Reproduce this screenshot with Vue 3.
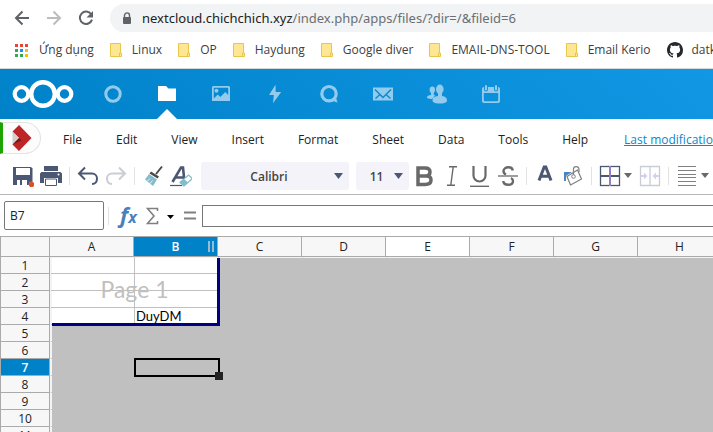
<script setup>
import { ref } from 'vue'

const bookmarks = ['Linux', 'OP', 'Haydung', 'Google diver', 'EMAIL-DNS-TOOL', 'Email Kerio']
const appDots = ['#ea4335', '#ea4335', '#ea4335', '#34a853', '#1a8cff', '#fbbc05', '#34a853', '#34a853', '#fbbc05']
const menus = ['File', 'Edit', 'View', 'Insert', 'Format', 'Sheet', 'Data', 'Tools', 'Help']
const columns = ['A', 'B', 'C', 'D', 'E', 'F', 'G', 'H']
const rows = Array.from({ length: 11 }, (_, i) => i + 1)
const cells = { B4: 'DuyDM' }
const cellName = ref('B7')
const formula = ref('')
</script>

<template>
  <div class="window">
    <div class="address-row">
      <button class="nav" aria-label="Back">
        <svg width="16" height="16" viewBox="0 0 16 16"><path d="M15 8H2M8.500 1.500L2 8l6.500 6.500" fill="none" stroke="#5f6368" stroke-width="2" /></svg>
      </button>
      <button class="nav" aria-label="Forward">
        <svg width="16" height="16" viewBox="0 0 16 16"><path d="M1 8h13M7.500 1.500L14 8l-6.500 6.500" fill="none" stroke="#babcbe" stroke-width="2" /></svg>
      </button>
      <button class="nav" aria-label="Reload">
        <svg width="16" height="16" viewBox="0 0 16 16"><path d="M13.200 4.300A6.200 6.200 0 1 0 14 9.600" fill="none" stroke="#5f6368" stroke-width="2" /><path d="M15 1v6.500H8.500z" fill="#5f6368" /></svg>
      </button>
      <div class="address">
        <svg width="10" height="13" viewBox="0 0 10 13"><path d="M2.500 6V3.400a2.500 2.500 0 0 1 5 0V6" fill="none" stroke="#5f6368" stroke-width="1.400" /><rect x="1" y="5" width="8" height="7" rx="1" fill="#5f6368" /></svg>
        <span class="url"><b>nextcloud.chichchich.xyz</b>/index.php/apps/files/?dir=/&amp;fileid=6</span>
      </div>
    </div>

    <nav class="bookmarks" aria-label="Bookmarks">
      <a href="#" class="apps">
        <svg width="13" height="13" viewBox="0 0 13 13"><rect v-for="(c, i) in appDots" :key="i" :x="(i % 3) * 5" :y="Math.floor(i / 3) * 5" width="3" height="3" :fill="c" /></svg>
        <span>Ứng dụng</span>
      </a>
      <a v-for="b in bookmarks" :key="b" href="#">
        <svg width="13" height="14" viewBox="0 0 13 14"><path d="M.5.500h10v9.500h1v3.500H.5z" fill="#ffe692" stroke="#e8c64c" /><path d="M9.500 13.500V10h1" fill="none" stroke="#e8c64c" /></svg>
        <span>{{ b }}</span>
      </a>
      <a href="#" class="github">
        <svg width="16" height="16" viewBox="0 0 16 16"><path fill="#24292e" d="M8 0C3.580 0 0 3.580 0 8c0 3.540 2.290 6.530 5.470 7.590.4.070.55-.17.55-.38 0-.19-.01-.82-.01-1.490-2.010.37-2.530-.49-2.690-.94-.09-.23-.48-.94-.82-1.130-.28-.15-.68-.52-.01-.53.63-.01 1.080.58 1.230.82.72 1.210 1.870.87 2.330.66.07-.52.28-.87.51-1.070-1.780-.2-3.640-.89-3.640-3.950 0-.87.31-1.590.82-2.150-.08-.2-.36-1.020.08-2.120 0 0 .67-.21 2.200.82.64-.18 1.320-.27 2-.27s1.360.09 2 .27c1.530-1.040 2.200-.82 2.200-.82.44 1.100.16 1.920.08 2.120.51.56.82 1.270.82 2.150 0 3.070-1.870 3.750-3.650 3.950.29.25.54.73.54 1.480 0 1.070-.01 1.930-.01 2.200 0 .21.15.46.55.38A8.010 8.010 0 0 0 16 8c0-4.420-3.580-8-8-8z" /></svg>
        <span>datk</span>
      </a>
    </nav>

    <header class="cloud">
      <a href="#" class="logo" aria-label="Home">
        <svg width="62" height="30" viewBox="0 0 62 30"><g fill="none" stroke="#fff"><circle cx="31" cy="15" r="11.800" stroke-width="4.400" /><circle cx="9.500" cy="15" r="6.800" stroke-width="4.200" /><circle cx="52.500" cy="15" r="6.800" stroke-width="4.200" /></g></svg>
      </a>
      <a href="#" class="app" aria-label="Dashboard"><svg viewBox="0 0 20 20"><circle cx="10" cy="10" r="7.200" fill="none" stroke="currentColor" stroke-width="3" /></svg></a>
      <a href="#" class="app current" aria-label="Files"><svg viewBox="0 0 20 20"><path d="M1 2h8l2.500 2.500H19V17H1z" fill="currentColor" /></svg></a>
      <a href="#" class="app" aria-label="Photos"><svg viewBox="0 0 20 20"><path fill="currentColor" fill-rule="evenodd" d="M2 2h16l1 1v14H1V3zm.8 1.800V14.500l4-4 2.500 2.500 5-5 2.900 3V3.800zM5.500 4.700a2 2 0 1 1 0 4 2 2 0 0 1 0-4z" /></svg></a>
      <a href="#" class="app" aria-label="Activity"><svg viewBox="0 0 20 20"><path d="M10.500.8L4 11h4.800L8 19.200 16.200 8h-5.500z" fill="currentColor" /></svg></a>
      <a href="#" class="app" aria-label="Talk"><svg viewBox="0 0 20 20"><circle cx="10" cy="9.700" r="7.200" fill="none" stroke="currentColor" stroke-width="3.200" /><path d="M16.500 12l2 6.500-6.500-2z" fill="currentColor" /></svg></a>
      <a href="#" class="app" aria-label="Mail"><svg viewBox="0 0 20 20"><path d="M0 3.500h20v13H0z" fill="currentColor" /><path d="M2 5.500l8 8 8-8M2.500 14.500l4.500-4M17.500 14.500l-4.500-4" fill="none" stroke="#0b8bd5" stroke-width="1.500" /></svg></a>
      <a href="#" class="app" aria-label="Contacts"><svg viewBox="0 0 20 20"><g fill="currentColor"><ellipse cx="12.800" cy="5.200" rx="3.800" ry="4.700" /><path d="M11 8h4v4c3.500.6 5 1.600 5 4.500 0 1-1 3-7 3s-7.500-1.500-7.500-3.200c0-2.600 2-3.800 5.500-4.300z" /><ellipse cx="5.300" cy="5.800" rx="2.700" ry="3.300" /><path d="M4 8h2.800v3l1.500.6-3.200 3.400C1 15 0 14.300 0 13.300c0-1.500 1.500-2.100 4-2.400z" /></g></svg></a>
      <a href="#" class="app" aria-label="Calendar"><svg viewBox="0 0 20 20"><g fill="none" stroke="currentColor"><path fill="currentColor" fill-rule="evenodd" stroke="none" d="M3 3h14a2 2 0 0 1 2 2v12a2 2 0 0 1-2 2H3a2 2 0 0 1-2-2V5a2 2 0 0 1 2-2zm-.2 6v7.500l.7.700h13l.7-.7V9z" /><path d="M5 1.500v4M15 1.500v4" stroke="#0c8cd8" stroke-width="4" stroke-linecap="round" /><path d="M5 2v3.500M15 2v3.500" stroke-width="2.200" stroke-linecap="round" /></g></svg></a>
    </header>

    <nav class="menu" aria-label="Document">
      <a href="#" class="doc-type" aria-label="Collabora">
        <svg width="20" height="26" viewBox="0 0 20 26"><path d="M7 0l12.500 13L7 26 .5 19.500 7 13 .5 6.500z" fill="#bd2527" /><path d="M.5 6.500L7 13 .5 19.500z" fill="#d0cfd0" /><path d="M.5 19.500L7 13l2.500 2.500z" fill="#7c1416" /></svg>
      </a>
      <button v-for="m in menus" :key="m">{{ m }}</button>
      <a href="#" class="modified">Last modification</a>
    </nav>

    <div class="toolbar" role="toolbar">
      <button aria-label="Save"><svg viewBox="0 0 22 22"><path d="M1 2h18l1.500 1.500V20H1z" fill="#4c5873" /><path d="M4 3h14v7H4z" fill="#fff" /><path d="M5 20v-5h10v5z" fill="#fff" /><path d="M9 15v5" stroke="#4c5873" stroke-width="2" /><circle cx="20" cy="20" r="3.200" fill="#fff" /><circle cx="19.500" cy="19.500" r="2.700" fill="#d9502e" /></svg></button>
      <button aria-label="Print"><svg viewBox="0 0 22 22"><path d="M4 1h14v5H4z" fill="#4c5873" /><path d="M1.500 7h19l1.500 1.500V18h-4v-5H4v5H0V8.500z" fill="#4c5873" /><path d="M5.500 14h11v6.500h-11z" fill="#fff" stroke="#4c5873" /><circle cx="18.500" cy="9.500" r="1" fill="#fff" /></svg></button>
      <i></i>
      <button aria-label="Undo"><svg viewBox="0 0 22 22"><path d="M8 2.500L2 8.500l6 6M2.500 8.500H15a5 5 0 0 1 5 5c0 3.500-2 5.500-5 5.500" fill="none" stroke="#4c5873" stroke-width="2" /></svg></button>
      <button aria-label="Redo"><svg viewBox="0 0 22 22"><path d="M14 2.500l6 6-6 6M19.500 8.500H7a5 5 0 0 0-5 5C2 17 4 19 7 19" fill="none" stroke="#c9cdd5" stroke-width="2" /></svg></button>
      <i></i>
      <button aria-label="Clone formatting"><svg viewBox="0 0 22 22"><path d="M20 1.500L14 9" stroke="#4a4a4a" stroke-width="2" /><path d="M9 6.500l8 5-1.500 2-8-5z" fill="#4a4a4a" /><path d="M7 9l8 5.500L11 21 3 14.500z" fill="#83bdcc" /><path d="M5.500 16l2.500-2.500M8 18.500l2.500-3" stroke="#fff" stroke-width=".8" /></svg></button>
      <button aria-label="Clear formatting"><svg viewBox="0 0 22 22"><path d="M2.500 17L11 2.500h2L14.500 17M6 12.500h8" fill="none" stroke="#4c5873" stroke-width="2.600" /><path d="M0 20.500h12" stroke="#4c5873" stroke-width="1.200" /><path d="M10 17.500L18.500 10l4 3.500L14 21z" fill="#fff" stroke="#83bdcc" stroke-width="1.300" /><path d="M10 17.500l4-3.500 4 3.500L14 21z" fill="#83bdcc" /></svg></button>
      <label class="pick family"><select aria-label="Font name"><option>Calibri</option></select><svg width="9" height="6" viewBox="0 0 9 6"><path d="M0 0h9L4.500 6z" fill="#4c5873" /></svg></label>
      <label class="pick size"><select aria-label="Font size"><option>11</option></select><svg width="9" height="6" viewBox="0 0 9 6"><path d="M0 0h9L4.500 6z" fill="#4c5873" /></svg></label>
      <button aria-label="Bold"><svg viewBox="0 0 22 22"><path d="M5 3v16.500h7c4.500 0 6-2 6-4.500s-1.800-4-4.500-4c2-.3 3.500-1.700 3.500-4C17 4.500 15.500 3 12 3zM5 11h9" fill="none" stroke="#696969" stroke-width="3.500" /></svg></button>
      <button aria-label="Italic"><svg viewBox="0 0 22 22"><path d="M8 1.700h8M6 20.300h8M12.200 2L9.800 20" fill="none" stroke="#696969" stroke-width="1.400" /></svg></button>
      <button aria-label="Underline"><svg viewBox="0 0 22 22"><path d="M4.500 1v9.500a6 6 0 0 0 12 0V1" fill="none" stroke="#696969" stroke-width="2.200" /><path d="M1 21.300h19" stroke="#696969" stroke-width="1.400" /></svg></button>
      <button aria-label="Strikethrough"><svg viewBox="0 0 22 22"><path d="M15.800 5.500C15.500 3 13.500 2.200 11.500 2.200 8.500 2.200 6.500 4 6.500 6c0 1.500 1 2.800 2.500 3.500M14 13c1.500.7 2 1.800 2 3 0 2.500-2 3.800-4.800 3.800-2.700 0-4.700-1.200-5-3.800" fill="none" stroke="#696969" stroke-width="2.400" /><path d="M1 11h20" stroke="#696969" stroke-width="1.300" /></svg></button>
      <i></i>
      <button aria-label="Font color"><svg viewBox="0 0 22 22"><path d="M5 15.500L10.200 2h1.600L17 15.500M7 11.200h8" fill="none" stroke="#4c5873" stroke-width="3" /></svg></button>
      <button aria-label="Background color"><svg viewBox="0 0 22 22"><path d="M2 7h8l-6 4v5H2z" fill="#4b86c4" /><path d="M5 11.500L15.500 5l4 9-11 6z" fill="#fff" stroke="#808080" stroke-width="1.200" stroke-linejoin="round" /><path d="M11.500 11V4c0-3 5-3.500 5.500 0v3" fill="none" stroke="#808080" stroke-width="1.200" /><circle cx="11.500" cy="11.500" r="1.800" fill="#fff" stroke="#808080" /></svg></button>
      <i></i>
      <button aria-label="Borders"><svg viewBox="0 0 22 22"><rect x="1.500" y="1.500" width="19" height="19" fill="#fff" stroke="#4c5873" stroke-width="1.300" /><path d="M1 11h20" stroke="#4c5873" stroke-width="2" /><path d="M11 1v20" stroke="#9380c4" stroke-width="2" /></svg></button>
      <button class="drop" aria-label="Border options"><svg viewBox="0 0 8 5"><path d="M0 0h8L4 5z" fill="#696969" /></svg></button>
      <button aria-label="Merge cells"><svg viewBox="0 0 22 22"><path d="M1.500 1.500h19v19h-19zM11 1v20" fill="none" stroke="#c9cdd5" stroke-width="1.300" /><path d="M2 11h4M16 11h4" stroke="#d6cff0" stroke-width="2" /><path d="M5 7.500L8.500 11 5 14.500zM17 7.500L13.500 11l3.500 3.500z" fill="#d6cff0" /></svg></button>
      <i></i>
      <button aria-label="Align"><svg viewBox="0 0 22 22"><path d="M2 1.500h18M2 5.500h18M2 9.500h18M2 12.500h18M2 16.500h18M2 20.500h18" stroke="#808080" /></svg></button>
      <button class="drop" aria-label="Align options"><svg viewBox="0 0 8 5"><path d="M0 0h8L4 5z" fill="#696969" /></svg></button>
    </div>

    <div class="formula-row">
      <input v-model="cellName" class="cell-name" aria-label="Cell address" />
      <i></i>
      <button class="fx" aria-label="Function wizard">f<small>x</small></button>
      <button class="sum" aria-label="Sum"><svg width="13" height="18" viewBox="0 0 13 18"><path d="M11.500 4V1.500H1.500L8 9l-6.500 7.500h10V14" fill="none" stroke="#808080" stroke-width="1.600" /></svg></button>
      <button class="sum-drop" aria-label="Sum options"><svg width="7" height="4" viewBox="0 0 7 4"><path d="M0 0h7L3.500 4z" fill="#000" /></svg></button>
      <button class="equals" aria-label="Formula"><svg width="12" height="9" viewBox="0 0 12 9"><path d="M0 1.500h12M0 7.500h12" stroke="#808080" stroke-width="2" /></svg></button>
      <input v-model="formula" class="formula" aria-label="Formula bar" />
    </div>

    <div class="sheet">
      <table>
        <thead>
          <tr>
            <th class="corner"></th>
            <th v-for="c in columns" :key="c" :class="{ active: c === 'B', hover: c === 'E' }">{{ c }}<span v-if="c === 'B'" class="grip"></span></th>
          </tr>
        </thead>
        <tbody>
          <tr v-for="r in rows" :key="r">
            <th :class="{ active: r === 7 }">{{ r }}</th>
            <td v-for="c in columns" :key="c" :class="{ page: r < 5 && c < 'C' }">{{ cells[c + r] }}</td>
          </tr>
        </tbody>
      </table>
      <div class="page-edge">Page 1</div>
      <div class="cursor"></div>
    </div>
  </div>
</template>

<style>
body {
  margin: 0;
  overflow: hidden;
}
</style>

<style scoped>
.window {
  height: 100vh;
  display: flex;
  flex-direction: column;
  overflow: hidden;
  background: #fff;
  color: #222;
  font: 12px/16px "Open Sans", "Noto Sans", sans-serif;
}
.window > * {
  flex-shrink: 0;
}
button {
  padding: 0;
  border: 0;
  background: none;
  color: inherit;
  font: inherit;
}
a {
  color: inherit;
  text-decoration: none;
}
svg {
  display: block;
}
input {
  box-sizing: border-box;
  border: 1px solid #777;
  background: #fff;
  color: #222;
  font: inherit;
}

.address-row {
  display: flex;
  align-items: center;
  gap: 16px;
  height: 28px;
  padding: 4px 0 4px 14px;
}
.address {
  flex: 1;
  display: flex;
  align-items: center;
  gap: 10px;
  height: 28px;
  padding-left: 12px;
  border-radius: 14px 0 0 14px;
  background: #f1f3f4;
}
.url {
  color: #6b6f73;
  font-family: "Noto Sans", sans-serif;
  font-size: 13px;
  white-space: nowrap;
}
.url b {
  color: #202124;
  font-weight: 400;
}

.bookmarks {
  display: flex;
  align-items: center;
  gap: 16px;
  height: 28px;
  padding: 0 0 4px 15px;
  border-bottom: 1px solid #d5d7da;
  color: #3c4043;
  font-size: 12px;
  white-space: nowrap;
}
.bookmarks a {
  display: flex;
  align-items: center;
  gap: 9px;
}
.bookmarks .apps {
  gap: 11px;
}

.cloud {
  display: flex;
  align-items: center;
  height: 50px;
  padding-left: 12px;
  background: linear-gradient(40deg, #0082c9, #1197e4);
}
.logo {
  width: 74px;
}
.app {
  display: flex;
  align-items: center;
  justify-content: center;
  width: 54px;
  height: 50px;
  color: #93cbec;
}
.app svg {
  width: 20px;
  height: 20px;
}
.current {
  position: relative;
  color: #fff;
}
.current::after {
  content: "";
  position: absolute;
  bottom: 0;
  border: 10px solid transparent;
  border-top: 0;
  border-bottom-color: #fff;
}

.menu {
  display: flex;
  align-items: center;
  height: 35px;
  padding-top: 3px;
  gap: 34px;
  font-size: 12px;
  white-space: nowrap;
}
.doc-type {
  display: flex;
  flex-shrink: 0;
  align-items: center;
  box-sizing: border-box;
  width: 41px;
  height: 32px;
  margin: 0 -12px 3px 0;
  padding-left: 9px;
  border: 1px solid #e3e3e3;
  border-left: 3px solid #1ba400;
  border-radius: 0 16px 16px 0;
  background: #fcfcfc;
}
.modified {
  margin-left: 2px;
  color: #0b87cc;
  text-decoration: underline;
}

.toolbar {
  display: flex;
  align-items: center;
  height: 37px;
  padding-left: 9px;
  border-bottom: 1px solid #b6b6b6;
}
.toolbar > * {
  flex-shrink: 0;
}
.toolbar button {
  display: flex;
  justify-content: center;
  width: 28px;
}
.toolbar button svg {
  width: 22px;
  height: 22px;
}
.toolbar .drop {
  width: 12px;
  justify-content: flex-start;
}
.toolbar .drop svg {
  width: 8px;
  height: 5px;
}
.toolbar i,
.formula-row i {
  width: 1px;
  height: 18px;
  margin: 0 4px;
  background: #e2e2e2;
}
.pick {
  position: relative;
  height: 28px;
  border-radius: 3px;
  background: #f3f3f9;
}
.pick select {
  appearance: none;
  width: 100%;
  height: 100%;
  padding: 2px 12px 0 0;
  border: 0;
  background: none;
  color: #444;
  font: 600 12px/16px "Open Sans", sans-serif;
  text-align: center;
  text-align-last: center;
}
.pick svg {
  position: absolute;
  top: 11px;
  right: 6px;
}
.family {
  width: 148px;
  margin: 0 7px 0 6px;
}
.size {
  width: 53px;
  margin-right: 1px;
}

.formula-row {
  display: flex;
  align-items: center;
  height: 41px;
  padding-left: 4px;
}
.formula-row > * {
  flex-shrink: 0;
}
.cell-name {
  width: 100px;
  height: 29px;
  padding: 0 5px;
  border-radius: 2px;
  font-size: 12px;
}
.fx {
  width: 22px;
  margin-left: 7px;
  color: #4b7fbc;
  font: italic 700 22px/26px "Open Sans", sans-serif;
  text-align: left;
  white-space: nowrap;
}
.fx small {
  font-size: 16px;
}
.sum {
  margin-left: 4px;
}
.sum-drop {
  margin: 3px 10px 0 8px;
}
.equals {
  margin-right: 6px;
}
.formula-row .formula {
  flex: 1;
  min-width: 0;
  height: 22px;
  border-right: 0;
}

.sheet {
  position: relative;
  flex: 1 0 0;
  min-height: 0;
  overflow: hidden;
  background: silver;
}
.window > .sheet {
  flex-shrink: 1;
}
table {
  width: 722px;
  table-layout: fixed;
  border-collapse: separate;
  border-spacing: 0;
}
th {
  box-sizing: border-box;
  height: 17px;
  padding: 0;
  border-right: 1px solid #aaa;
  border-bottom: 1px solid #aaa;
  background: #f7f7f7;
  font-weight: 400;
  line-height: 15px;
}
thead th {
  position: relative;
  width: 84px;
  height: 21px;
  border-top: 1px solid #aaa;
}
tbody th,
.corner {
  border-left: 1px solid #aaa;
}
thead .corner {
  width: 50px;
}
th.hover {
  background: #fff;
}
th.active {
  background: #0082c9;
  color: #fff;
  font-weight: 600;
}
.grip {
  position: absolute;
  top: 4px;
  right: 3px;
  width: 2px;
  height: 11px;
  border: solid #9cb9d0;
  border-width: 0 2px;
}
td {
  box-sizing: border-box;
  height: 17px;
  padding: 0 1px;
  border: solid transparent;
  border-width: 0 0 1px 1px;
  color: #000;
  font: 13px/15px Lato, sans-serif;
}
td.page {
  border-color: silver;
  background: #fff;
}
tbody td:nth-child(2) {
  border-left: 2px solid #f4f4f4;
}
tbody tr:first-child td {
  border-top: 1px solid #f4f4f4;
}
.page-edge {
  position: absolute;
  top: 22px;
  left: 52px;
  box-sizing: border-box;
  width: 168px;
  height: 68px;
  border: solid #000080;
  border-width: 0 3px 3px 0;
  color: silver;
  font: 23px/62px Lato, sans-serif;
  text-align: center;
}
.cursor {
  position: absolute;
  top: 122px;
  left: 134px;
  box-sizing: border-box;
  width: 86px;
  height: 19px;
  border: 2px solid #000;
}
.cursor::after {
  content: "";
  position: absolute;
  right: -5px;
  bottom: -5px;
  width: 8px;
  height: 8px;
  background: #222;
}
</style>
